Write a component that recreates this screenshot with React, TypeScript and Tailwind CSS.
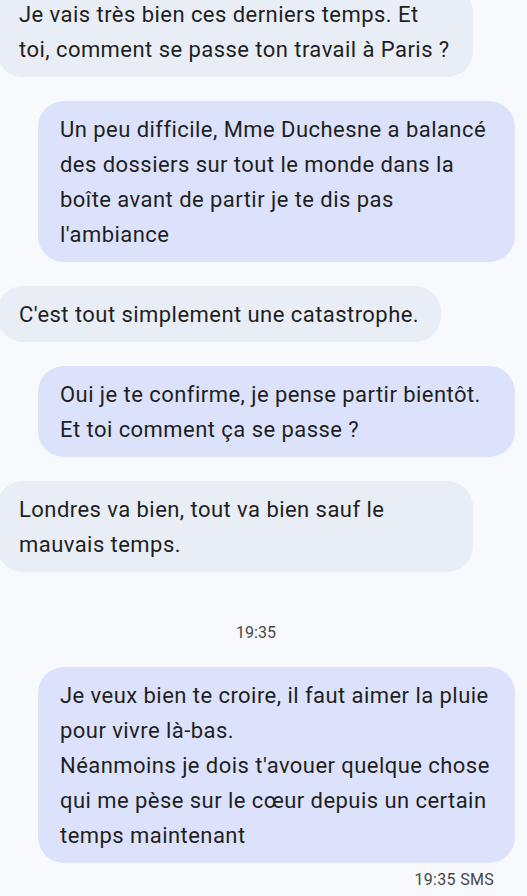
type Msg =
  | { kind: "in"; lines: string[] }
  | { kind: "out"; lines: string[] }
  | { kind: "time"; label: string };

// lines are laid out as they wrap on the phone
const thread: Msg[] = [
  { kind: "in", lines: ["Je vais très bien ces derniers temps. Et", "toi, comment se passe ton travail à Paris ?"] },
  {
    kind: "out",
    lines: [
      "Un peu difficile, Mme Duchesne a balancé",
      "des dossiers sur tout le monde dans la",
      "boîte avant de partir je te dis pas",
      "l'ambiance",
    ],
  },
  { kind: "in", lines: ["C'est tout simplement une catastrophe."] },
  { kind: "out", lines: ["Oui je te confirme, je pense partir bientôt.", "Et toi comment ça se passe ?"] },
  { kind: "in", lines: ["Londres va bien, tout va bien sauf le", "mauvais temps."] },
  { kind: "time", label: "19:35" },
  {
    kind: "out",
    lines: [
      "Je veux bien te croire, il faut aimer la pluie",
      "pour vivre là-bas.",
      "Néanmoins je dois t'avouer quelque chose",
      "qui me pèse sur le cœur depuis un certain",
      "temps maintenant",
    ],
  },
];

function clsx(...parts: (string | false | undefined)[]) {
  return parts.filter(Boolean).join(" ");
}

function Bubble({ side, lines }: { side: "in" | "out"; lines: string[] }) {
  const isOut = side === "out";
  const multi = lines.length > 1;
  return (
    <div className={isOut ? "flex justify-end pr-[12px]" : "flex justify-start"}>
      <div
        className={clsx(
          "rounded-[26px] px-[22px] py-[10.5px]",
          isOut ? "bg-[#dce2fb]" : "-ml-[3px] bg-[#e9edf5]",
          multi && (isOut ? "w-[477px]" : "w-[476px]"),
        )}
      >
        {lines.map((l, i) => (
          <p key={i} className="whitespace-nowrap text-[22px] leading-[35px] tracking-[0.45px] text-[#1f1f1f]">
            {l}
          </p>
        ))}
      </div>
    </div>
  );
}

export default function App() {
  return (
    <div className="h-[896px] w-[527px] overflow-hidden bg-[#f7f9fc] font-['Roboto',sans-serif]">
      <div className="-mt-[14px] flex flex-col">
        {thread.map((m, i) => {
          if (m.kind === "time") {
            return (
              <div key={i} className="mt-[51px] pr-[15px] text-center text-[16px] leading-[20px] text-[#444746]">
                {m.label}
              </div>
            );
          }
          return (
            <div key={i} className={i === 0 ? "" : "mt-[24px]"}>
              <Bubble side={m.kind} lines={m.lines} />
            </div>
          );
        })}
        <div className="mt-[7px] pr-[33px] text-right text-[16px] leading-[20px] tracking-[0.3px] text-[#444746]">
          19:35 SMS
        </div>
      </div>
    </div>
  );
}
